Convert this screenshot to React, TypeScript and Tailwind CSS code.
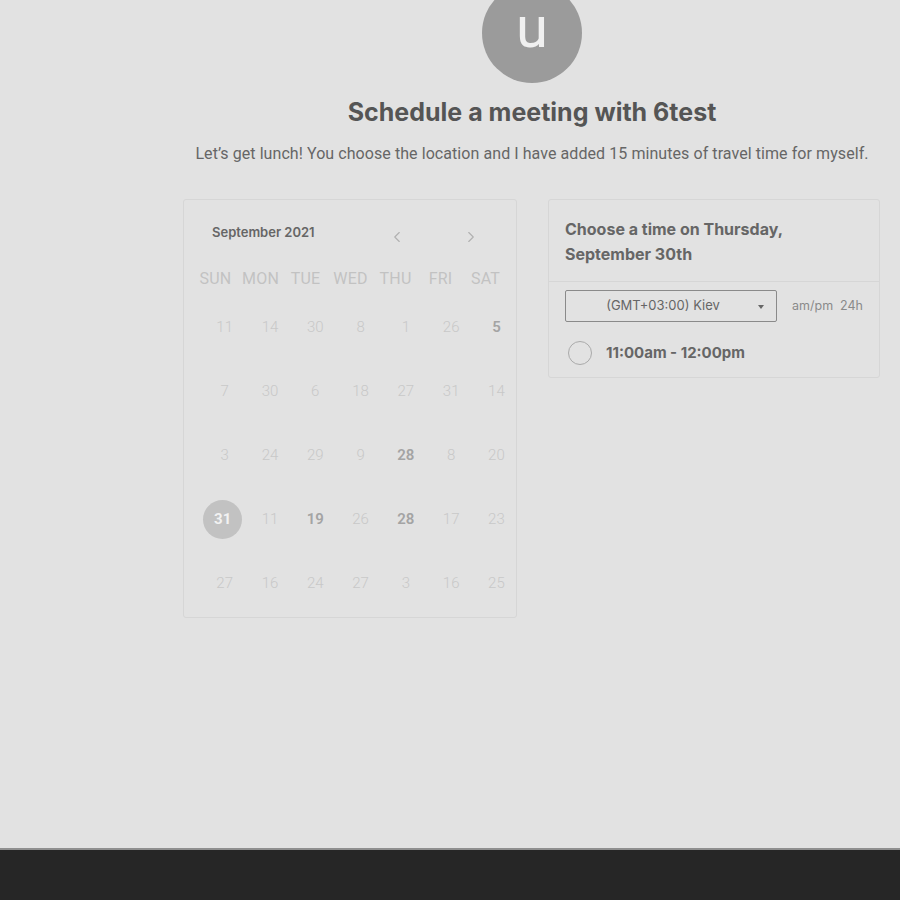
import React from 'react';
import { ChevronLeft, ChevronRight } from 'lucide-react';

type Day = { n: number; strong?: boolean; selected?: boolean };

const weekDays = ['SUN', 'MON', 'TUE', 'WED', 'THU', 'FRI', 'SAT'];

const weeks: Day[][] = [
  [{ n: 11 }, { n: 14 }, { n: 30 }, { n: 8 }, { n: 1 }, { n: 26 }, { n: 5, strong: true }],
  [{ n: 7 }, { n: 30 }, { n: 6 }, { n: 18 }, { n: 27 }, { n: 31 }, { n: 14 }],
  [{ n: 3 }, { n: 24 }, { n: 29 }, { n: 9 }, { n: 28, strong: true }, { n: 8 }, { n: 20 }],
  [{ n: 31, selected: true }, { n: 11 }, { n: 19, strong: true }, { n: 26 }, { n: 28, strong: true }, { n: 17 }, { n: 23 }],
  [{ n: 27 }, { n: 16 }, { n: 24 }, { n: 27 }, { n: 3 }, { n: 16 }, { n: 25 }],
];

const inter = "font-['Inter',_'Liberation_Sans',_sans-serif]";

function Calendar() {
  return (
    <div className="w-[334px] h-[419px] shrink-0 rounded-[3px] border border-[#d6d6d6] pt-[24px]">
      <div className="flex items-center h-[18px] pl-[28px]">
        <span className={`${inter} text-[13px] font-semibold text-[#666]`}>September 2021</span>
        <ChevronLeft className="ml-[73px] mt-[8px] w-[18px] h-[18px] text-[#b0b0b0]" strokeWidth={1.5} />
        <ChevronRight className="ml-[56px] mt-[8px] w-[18px] h-[18px] text-[#b0b0b0]" strokeWidth={1.5} />
      </div>
      <div className="grid grid-cols-[repeat(7,45px)] ml-[9px] mt-[25px] h-[24px] items-center">
        {weekDays.map((d) => (
          <div key={d} className="text-center text-[16px] tracking-[0.2px] text-[#c2c2c2]">
            {d}
          </div>
        ))}
      </div>
      <div className="ml-[18px] mt-[16px] flex flex-col gap-[24px]">
        {weeks.map((week, i) => (
          <div key={i} className="grid grid-cols-[repeat(7,45.3px)] h-[40px] items-center">
            {week.map((day, j) =>
              day.selected ? (
                <div key={j} className="flex justify-center">
                  <div className="w-[39px] h-[39px] -ml-[4px] rounded-full bg-[#c2c2c2] flex items-center justify-center text-[15px] font-bold text-[#f2f2f2]">
                    {day.n}
                  </div>
                </div>
              ) : (
                <div
                  key={j}
                  className={
                    day.strong
                      ? 'text-center text-[15px] font-semibold text-[#a4a4a4]'
                      : 'text-center text-[15px] font-light text-[#c8c8c8]'
                  }
                >
                  {day.n}
                </div>
              )
            )}
          </div>
        ))}
      </div>
    </div>
  );
}

function TimePicker() {
  return (
    <div className={`${inter} w-[332px] h-[179px] shrink-0 rounded-[3px] border border-[#d6d6d6]`}>
      <div className="px-[16px] pt-[17px] pb-[14px] border-b border-[#d6d6d6]">
        <h2 className="text-[16px] leading-[25px] font-bold text-[#666]">
          Choose a time on Thursday,
          <br />
          September 30th
        </h2>
      </div>
      <div className="flex items-center mt-[8px] pl-[16px]">
        <div className="relative w-[212px] h-[32px] rounded-[2px] border border-[#8a8a8a] flex items-center justify-center">
          <span className="text-[13px] text-[#666] -ml-[16px]">(GMT+03:00) Kiev</span>
          <span className="absolute right-[12px] top-[14px] w-0 h-0 border-l-[3.5px] border-r-[3.5px] border-t-[4px] border-l-transparent border-r-transparent border-t-[#666]" />
        </div>
        <span className="ml-[15px] text-[12.5px] text-[#8a8a8a]">am/pm</span>
        <span className="ml-[7px] text-[12.5px] text-[#8a8a8a]">24h</span>
      </div>
      <div className="flex items-center mt-[19px] pl-[19px]">
        <div className="w-[24px] h-[24px] rounded-full border-[1.5px] border-[#aaa]" />
        <span className="ml-[14px] text-[15px] font-bold text-[#666]">11:00am - 12:00pm</span>
      </div>
    </div>
  );
}

export default function App() {
  return (
    <div className="min-h-[900px] bg-[#e2e2e2] flex flex-col font-['Roboto',_'Liberation_Sans',_sans-serif] overflow-hidden">
      <main className="h-[848px] overflow-hidden">
        <div className="ml-[183px] w-[698px] flex flex-col items-center">
          <div className="-mt-[17px] w-[100px] h-[100px] rounded-full bg-[#9b9b9b] flex items-center justify-center">
            <span className="text-[58px] leading-[40px] text-[#f0f0f0] -mt-[12px]">u</span>
          </div>
          <h1 className={`${inter} mt-[13px] text-[25px] leading-[32px] font-bold text-[#555]`}>
            Schedule a meeting with 6test
          </h1>
          <p className="mt-[14px] text-[16px] leading-[24px] tracking-[0.07px] text-[#666] whitespace-nowrap">
            Let’s get lunch! You choose the location and I have added 15 minutes of travel time for myself.
          </p>
          <div className="mt-[33px] w-full flex gap-[31px]">
            <Calendar />
            <TimePicker />
          </div>
        </div>
      </main>
      <footer className="h-[52px] bg-[#262626] border-t-2 border-[#8f8f8f]" />
    </div>
  );
}
